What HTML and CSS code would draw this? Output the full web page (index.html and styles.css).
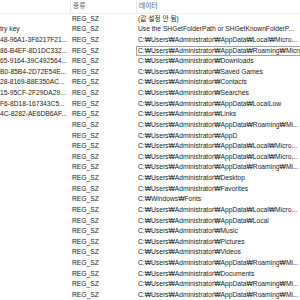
FILE: index.html
```html
<!DOCTYPE html>
<html lang="ko">
<head>
<meta charset="utf-8">
<link rel="stylesheet" href="styles.css">
</head>
<body>
<div class="list">
  <div class="header">
    <div class="hcell c-name"></div>
    <div class="hcell c-type">종류</div>
    <div class="hcell c-data">데이터</div>
  </div>
  <div class="row"><div class="c-name"></div><div class="c-type">REG_SZ</div><div class="c-data">(값 설정 안 됨)</div></div>
  <div class="row"><div class="c-name">try key</div><div class="c-type">REG_SZ</div><div class="c-data">Use the SHGetFolderPath or SHGetKnownFolderP...</div></div>
  <div class="row"><div class="c-name">48-96A1-3F6217F21...</div><div class="c-type">REG_SZ</div><div class="c-data">C:₩Users₩Administrator₩AppData₩Local₩Micro...</div></div>
  <div class="row"><div class="c-name">86-B4EF-8D1DC332...</div><div class="c-type">REG_SZ</div><div class="c-data focus">C:₩Users₩Administrator₩AppData₩Roaming₩Micros</div></div>
  <div class="row"><div class="c-name">65-9164-39C492564...</div><div class="c-type">REG_SZ</div><div class="c-data">C:₩Users₩Administrator₩Downloads</div></div>
  <div class="row"><div class="c-name">B0-85B4-2D72E54E...</div><div class="c-type">REG_SZ</div><div class="c-data">C:₩Users₩Administrator₩Saved Games</div></div>
  <div class="row"><div class="c-name">28-8169-88E350AC...</div><div class="c-type">REG_SZ</div><div class="c-data">C:₩Users₩Administrator₩Contacts</div></div>
  <div class="row"><div class="c-name">15-95CF-2F29DA29...</div><div class="c-type">REG_SZ</div><div class="c-data">C:₩Users₩Administrator₩Searches</div></div>
  <div class="row"><div class="c-name">F6-8D18-167343C5...</div><div class="c-type">REG_SZ</div><div class="c-data">C:₩Users₩Administrator₩AppData₩LocalLow</div></div>
  <div class="row"><div class="c-name">4C-8282-AE6DB6AF...</div><div class="c-type">REG_SZ</div><div class="c-data">C:₩Users₩Administrator₩Links</div></div>
  <div class="row"><div class="c-name"></div><div class="c-type">REG_SZ</div><div class="c-data">C:₩Users₩Administrator₩AppData₩Roaming₩Mi...</div></div>
  <div class="row"><div class="c-name"></div><div class="c-type">REG_SZ</div><div class="c-data">C:₩Users₩Administrator₩AppD</div></div>
  <div class="row"><div class="c-name"></div><div class="c-type">REG_SZ</div><div class="c-data">C:₩Users₩Administrator₩AppData₩Local₩Micro...</div></div>
  <div class="row"><div class="c-name"></div><div class="c-type">REG_SZ</div><div class="c-data">C:₩Users₩Administrator₩AppData₩Local₩Micro...</div></div>
  <div class="row"><div class="c-name"></div><div class="c-type">REG_SZ</div><div class="c-data">C:₩Users₩Administrator₩AppData₩Roaming₩Mi...</div></div>
  <div class="row"><div class="c-name"></div><div class="c-type">REG_SZ</div><div class="c-data">C:₩Users₩Administrator₩Desktop</div></div>
  <div class="row"><div class="c-name"></div><div class="c-type">REG_SZ</div><div class="c-data">C:₩Users₩Administrator₩Favorites</div></div>
  <div class="row"><div class="c-name"></div><div class="c-type">REG_SZ</div><div class="c-data">C:₩Windows₩Fonts</div></div>
  <div class="row"><div class="c-name"></div><div class="c-type">REG_SZ</div><div class="c-data">C:₩Users₩Administrator₩AppData₩Local₩Micro...</div></div>
  <div class="row"><div class="c-name"></div><div class="c-type">REG_SZ</div><div class="c-data">C:₩Users₩Administrator₩AppData₩Local</div></div>
  <div class="row"><div class="c-name"></div><div class="c-type">REG_SZ</div><div class="c-data">C:₩Users₩Administrator₩Music</div></div>
  <div class="row"><div class="c-name"></div><div class="c-type">REG_SZ</div><div class="c-data">C:₩Users₩Administrator₩Pictures</div></div>
  <div class="row"><div class="c-name"></div><div class="c-type">REG_SZ</div><div class="c-data">C:₩Users₩Administrator₩Videos</div></div>
  <div class="row"><div class="c-name"></div><div class="c-type">REG_SZ</div><div class="c-data">C:₩Users₩Administrator₩AppData₩Roaming₩Mi...</div></div>
  <div class="row"><div class="c-name"></div><div class="c-type">REG_SZ</div><div class="c-data">C:₩Users₩Administrator₩Documents</div></div>
  <div class="row"><div class="c-name"></div><div class="c-type">REG_SZ</div><div class="c-data">C:₩Users₩Administrator₩AppData₩Roaming₩Mi...</div></div>
  <div class="row"><div class="c-name"></div><div class="c-type">REG_SZ</div><div class="c-data">C:₩Users₩Administrator₩AppData₩Roaming₩Mi...</div></div>
</div>
</body>
</html>
```
FILE: styles.css
```css
html, body {
  margin: 0;
  padding: 0;
  background: #ffffff;
  width: 300px;
  height: 300px;
  overflow: hidden;
}
.list {
  font-family: "Liberation Sans", "Noto Sans CJK KR", sans-serif;
  font-size: 6.7px;
  color: #1a1a1a;
  width: 300px;
}
.header {
  display: flex;
  height: 13.7px;
  border-bottom: 1px solid #eef0f3;
  box-sizing: border-box;
  color: #4c5868;
  line-height: 12px;
}
.hcell {
  height: 100%;
  box-sizing: border-box;
}
.header .c-type, .header .c-data {
  border-left: 1px solid #e6e8eb;
}
.row {
  display: flex;
  height: 10.64px;
  line-height: 10.64px;
}
.c-name {
  width: 70px;
  flex: none;
  white-space: nowrap;
  overflow: hidden;
}
.c-type {
  width: 66px;
  flex: none;
  padding-left: 2px;
  box-sizing: border-box;
  white-space: nowrap;
  overflow: hidden;
}
.c-data {
  flex: 1;
  padding-left: 2px;
  white-space: nowrap;
  overflow: hidden;
  box-sizing: border-box;
}
.focus {
  border: 1px solid #a3a3a3;
  border-right: none;
  padding-left: 1px;
  line-height: 8.64px;
}
```
